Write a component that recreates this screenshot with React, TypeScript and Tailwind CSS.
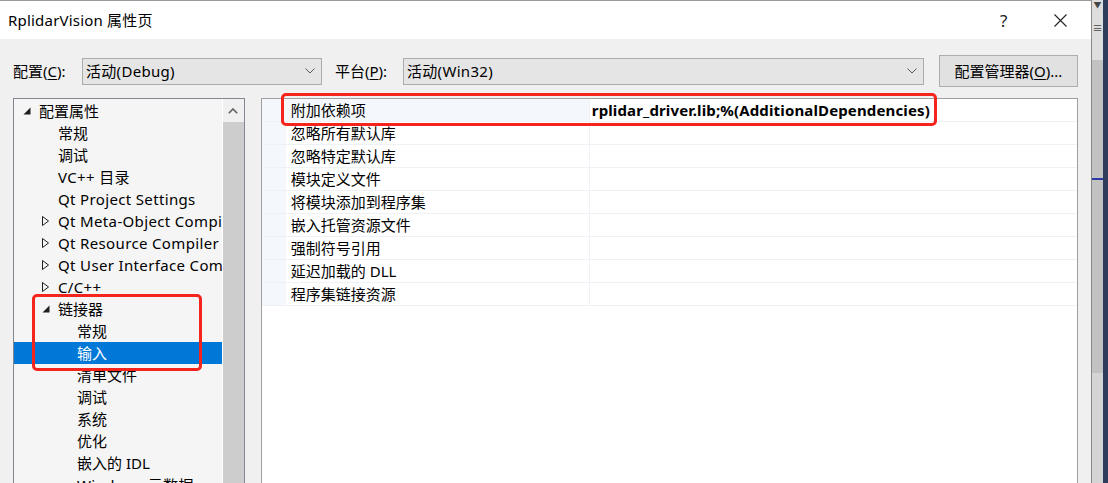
import React from "react";

const FONT = { fontFamily: '"Noto Sans", "Noto Sans CJK SC", sans-serif' };

type Node = { t: string; lvl: number; exp?: "open" | "closed"; sel?: boolean; latin?: boolean };

const tree: Node[] = [
  { t: "配置属性", lvl: 0, exp: "open" },
  { t: "常规", lvl: 1 },
  { t: "调试", lvl: 1 },
  { t: "VC++ 目录", lvl: 1, latin: true },
  { t: "Qt Project Settings", lvl: 1, latin: true },
  { t: "Qt Meta-Object Compiler", lvl: 1, exp: "closed", latin: true },
  { t: "Qt Resource Compiler", lvl: 1, exp: "closed", latin: true },
  { t: "Qt User Interface Compiler", lvl: 1, exp: "closed", latin: true },
  { t: "C/C++", lvl: 1, exp: "closed", latin: true },
  { t: "链接器", lvl: 1, exp: "open" },
  { t: "常规", lvl: 2 },
  { t: "输入", lvl: 2, sel: true },
  { t: "清单文件", lvl: 2 },
  { t: "调试", lvl: 2 },
  { t: "系统", lvl: 2 },
  { t: "优化", lvl: 2 },
  { t: "嵌入的 IDL", lvl: 2 },
  { t: "Windows 元数据", lvl: 2, latin: true },
];

const padCls = ["pl-[9px]", "pl-[28px]", "pl-[47px]"];

const props = [
  "附加依赖项",
  "忽略所有默认库",
  "忽略特定默认库",
  "模块定义文件",
  "将模块添加到程序集",
  "嵌入托管资源文件",
  "强制符号引用",
  "延迟加载的 DLL",
  "程序集链接资源",
];

function Chevron() {
  return (
    <svg width="10" height="6" viewBox="0 0 10 6" className="shrink-0">
      <path d="M0.5 0.5 L5 5 L9.5 0.5" fill="none" stroke="#5a5a5a" strokeWidth="1" />
    </svg>
  );
}

function Expander({ exp }: { exp?: "open" | "closed" }) {
  if (exp === "open")
    return (
      <svg width="8" height="8" viewBox="0 0 8 8">
        <polygon points="7.5,0.5 7.5,7.5 0.5,7.5" fill="#1e1e1e" />
      </svg>
    );
  if (exp === "closed")
    return (
      <svg width="8" height="10" viewBox="0 0 8 10">
        <polygon points="0.5,0.5 6.5,5 0.5,9.5" fill="none" stroke="#1e1e1e" strokeWidth="1" />
      </svg>
    );
  return null;
}

export default function App() {
  return (
    <div
      className="w-[1108px] h-[483px] overflow-hidden flex bg-[#f0f0f0] text-[15px] text-black relative"
      style={FONT}
    >
      {/* dialog */}
      <div className="w-[1092px] flex flex-col border-t border-[#9a9a9a] border-r border-r-[#8a8a8a]">
        {/* title bar */}
        <div className="h-[38px] bg-white flex items-center pl-[8px] shrink-0">
          <span className="text-[15px] leading-none tracking-[0.2px]">RplidarVision 属性页</span>
          <div className="flex-1" />
          <span className="text-[17px] leading-none w-[14px] mr-[40px] text-[#222]">?</span>
          <svg width="13" height="13" viewBox="0 0 13 13" className="mr-[24px]">
            <path d="M0.5 0.5 L12.5 12.5 M12.5 0.5 L0.5 12.5" stroke="#222" strokeWidth="1.1" />
          </svg>
        </div>

        {/* body */}
        <div className="flex-1 flex flex-col pt-[16px]">
          {/* config row */}
          <div className="h-[32px] flex items-center pl-[13px] pr-[13px] shrink-0">
            <span className="w-[69px] whitespace-nowrap">
              配置(<span className="underline underline-offset-2">C</span>):
            </span>
            <div className="w-[240px] h-[27px] bg-[#e5e5e5] border border-[#acacac] flex items-center pl-[3px] pr-[6px]">
              <span className="flex-1 whitespace-nowrap tracking-[0.3px]">活动(Debug)</span>
              <Chevron />
            </div>
            <span className="ml-[13px] w-[68px] whitespace-nowrap">
              平台(<span className="underline underline-offset-2">P</span>):
            </span>
            <div className="w-[521px] h-[27px] bg-[#e5e5e5] border border-[#acacac] flex items-center pl-[3px] pr-[6px]">
              <span className="flex-1 whitespace-nowrap tracking-[0.3px]">活动(Win32)</span>
              <Chevron />
            </div>
            <div className="ml-[15px] w-[139px] h-[32px] bg-[#e1e1e1] border border-[#adadad] flex items-center justify-center whitespace-nowrap">
              配置管理器(<span className="underline underline-offset-2">O</span>)...
            </div>
          </div>

          {/* panels */}
          <div className="flex-1 flex pl-[13px] pr-[13px] pt-[11px] gap-[16px] min-h-0">
            {/* tree */}
            <div className="w-[232px] border border-[#828790] bg-[#f5f5f5] flex overflow-hidden">
              <div className="w-[209px] pt-[1px] flex flex-col border-r border-white">
                {tree.map((n, i) => (
                  <div
                    key={i}
                    className={`h-[22px] shrink-0 flex items-center whitespace-nowrap overflow-hidden ${padCls[n.lvl]} ${
                      n.sel ? "bg-[#0078d7] text-white" : ""
                    }`}
                  >
                    <span className="w-[16px] shrink-0 flex items-center">
                      <Expander exp={n.exp} />
                    </span>
                    <span className={`leading-none ${n.latin ? "tracking-[0.35px]" : ""}`}>{n.t}</span>
                  </div>
                ))}
              </div>
              <div className="flex-1 flex flex-col">
                <div className="h-[23px] bg-[#f0f0f0] flex items-center justify-center">
                  <svg width="10" height="6" viewBox="0 0 10 6">
                    <path d="M0.8 5.2 L5 1 L9.2 5.2" fill="none" stroke="#606060" strokeWidth="1.6" />
                  </svg>
                </div>
                <div className="flex-1 bg-[#cdcdcd]" />
              </div>
            </div>

            {/* property grid */}
            <div className="w-[818px] border border-[#a0a0a0] bg-white flex flex-col">
              {props.map((p, i) => (
                <div key={i} className="h-[23px] shrink-0 flex border-b border-[#eef1f6]">
                  <div className="w-[24px] bg-[#f4f7fb] shrink-0" />
                  <div
                    className={`w-[304px] shrink-0 pl-[5px] flex items-center border-r border-[#eef1f6] ${
                      i === 0 ? "bg-[#f4f7fb]" : ""
                    }`}
                  >
                    <span className="leading-none whitespace-nowrap">{p}</span>
                  </div>
                  <div className="flex-1 pl-[2px] flex items-center">
                    {i === 0 && (
                      <span className="font-bold leading-none whitespace-nowrap tracking-[0.14px]">
                        rplidar_driver.lib;%(AdditionalDependencies)
                      </span>
                    )}
                  </div>
                </div>
              ))}
            </div>
          </div>
        </div>
      </div>

      {/* outside strip */}
      <div className="w-[16px] flex">
        <div className="w-[11px] flex flex-col bg-[#d6d6d6]">
          <div className="h-[60px] bg-[#dedede] flex flex-col items-center pt-[1px] text-[8px] leading-none text-[#444]">
            <span>▼</span>
            <span className="mt-[14px] text-[10px]">≡</span>
          </div>
          <div className="h-[118px] bg-[#c2c2c2]" />
          <div className="h-[2px] bg-[#2a3aa8]" />
          <div className="h-[193px] bg-[#c2c2c2]" />
          <div className="flex-1 bg-[#d4d4d4]" />
        </div>
        <div className="w-[5px] bg-[#2e3d5c]" />
      </div>

      {/* red annotation boxes */}
      <div className="absolute left-[281px] top-[93px] w-[656px] h-[33px] border-[3px] border-[#f5241c] rounded-[5px] pointer-events-none" />
      <div className="absolute left-[32px] top-[294px] w-[170px] h-[77px] border-[3px] border-[#f5241c] rounded-[5px] pointer-events-none" />
    </div>
  );
}
